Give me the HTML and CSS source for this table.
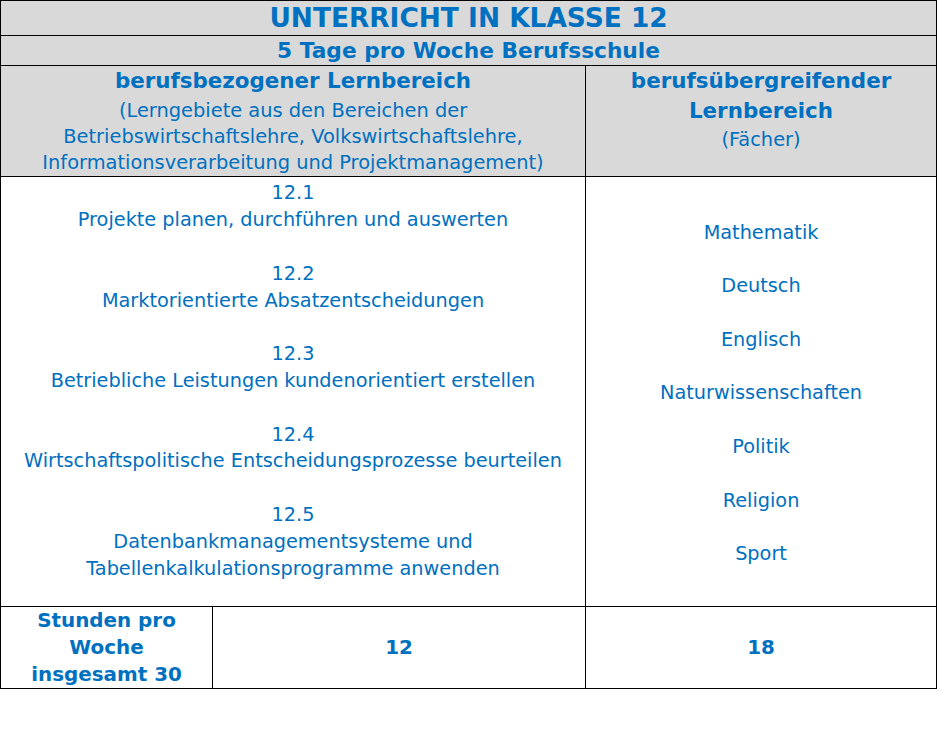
FILE: index.html
```html
<!DOCTYPE html>
<html lang="de">
<head>
<meta charset="utf-8">
<title>Unterricht in Klasse 12</title>
<link rel="stylesheet" href="styles.css">
</head>
<body>
<table class="plan">
  <colgroup>
    <col class="c1">
    <col class="c2">
    <col class="c3">
  </colgroup>
  <tr class="r-title">
    <td colspan="3" class="gray title">UNTERRICHT IN KLASSE 12</td>
  </tr>
  <tr class="r-sub">
    <td colspan="3" class="gray sub">5 Tage pro Woche Berufsschule</td>
  </tr>
  <tr class="r-head">
    <td colspan="2" class="gray head">
      <div class="hb">berufsbezogener Lernbereich</div>
      <div class="hn">(Lerngebiete aus den Bereichen der<br>Betriebswirtschaftslehre, Volkswirtschaftslehre,<br>Informationsverarbeitung und Projektmanagement)</div>
    </td>
    <td class="gray head head-right">
      <div class="hb">berufsübergreifender<br>Lernbereich</div>
      <div class="hn">(Fächer)</div>
    </td>
  </tr>
  <tr class="r-body">
    <td colspan="2" class="body-left">
      12.1<br>Projekte planen, durchführen und auswerten<br><br>
      12.2<br>Marktorientierte Absatzentscheidungen<br><br>
      12.3<br>Betriebliche Leistungen kundenorientiert erstellen<br><br>
      12.4<br>Wirtschaftspolitische Entscheidungsprozesse beurteilen<br><br>
      12.5<br>Datenbankmanagementsysteme und<br>Tabellenkalkulationsprogramme anwenden
    </td>
    <td class="body-right">
      Mathematik<br><br>Deutsch<br><br>Englisch<br><br>Naturwissenschaften<br><br>Politik<br><br>Religion<br><br>Sport
    </td>
  </tr>
  <tr class="r-foot">
    <td class="foot">Stunden pro<br>Woche<br>insgesamt 30</td>
    <td class="foot">12</td>
    <td class="foot">18</td>
  </tr>
</table>
</body>
</html>
```
FILE: styles.css
```css
html, body {
  margin: 0;
  padding: 0;
  background: #ffffff;
}

body {
  font-family: "DejaVu Sans", Verdana, sans-serif;
  color: #0070c0;
}

.plan {
  border-collapse: collapse;
  width: 936px;
  table-layout: fixed;
}

.c1 { width: 212px; }
.c2 { width: 373px; }
.c3 { width: 351px; }

.plan td {
  border: 1px solid #000;
  text-align: center;
  padding: 0;
}

.gray {
  background: #d9d9d9;
}

.r-title td { height: 34px; }
.r-sub td { height: 29px; }
.r-head td { height: 110px; }

.title {
  font-weight: bold;
  font-size: 26.4px;
  line-height: 34px;
}

.sub {
  font-weight: bold;
  font-size: 21.7px;
  line-height: 29px;
}

.plan td.head {
  vertical-align: top;
}

.hb {
  font-weight: bold;
  font-size: 21.4px;
  line-height: 30px;
}

.hn {
  font-size: 19.4px;
  line-height: 26.3px;
  margin-top: 1.5px;
}

.head-right .hn {
  margin-top: 1px;
}

.plan td.body-left {
  vertical-align: top;
  font-size: 19.3px;
  line-height: 26.8px;
  padding-top: 3px;
  height: 426px;
}

.plan td.body-right {
  vertical-align: middle;
  font-size: 19.3px;
  line-height: 26.8px;
  padding-top: 4px;
  height: 425px;
}

.plan td.foot {
  font-weight: bold;
  font-size: 19.9px;
  line-height: 27px;
  height: 80px;
}
```
